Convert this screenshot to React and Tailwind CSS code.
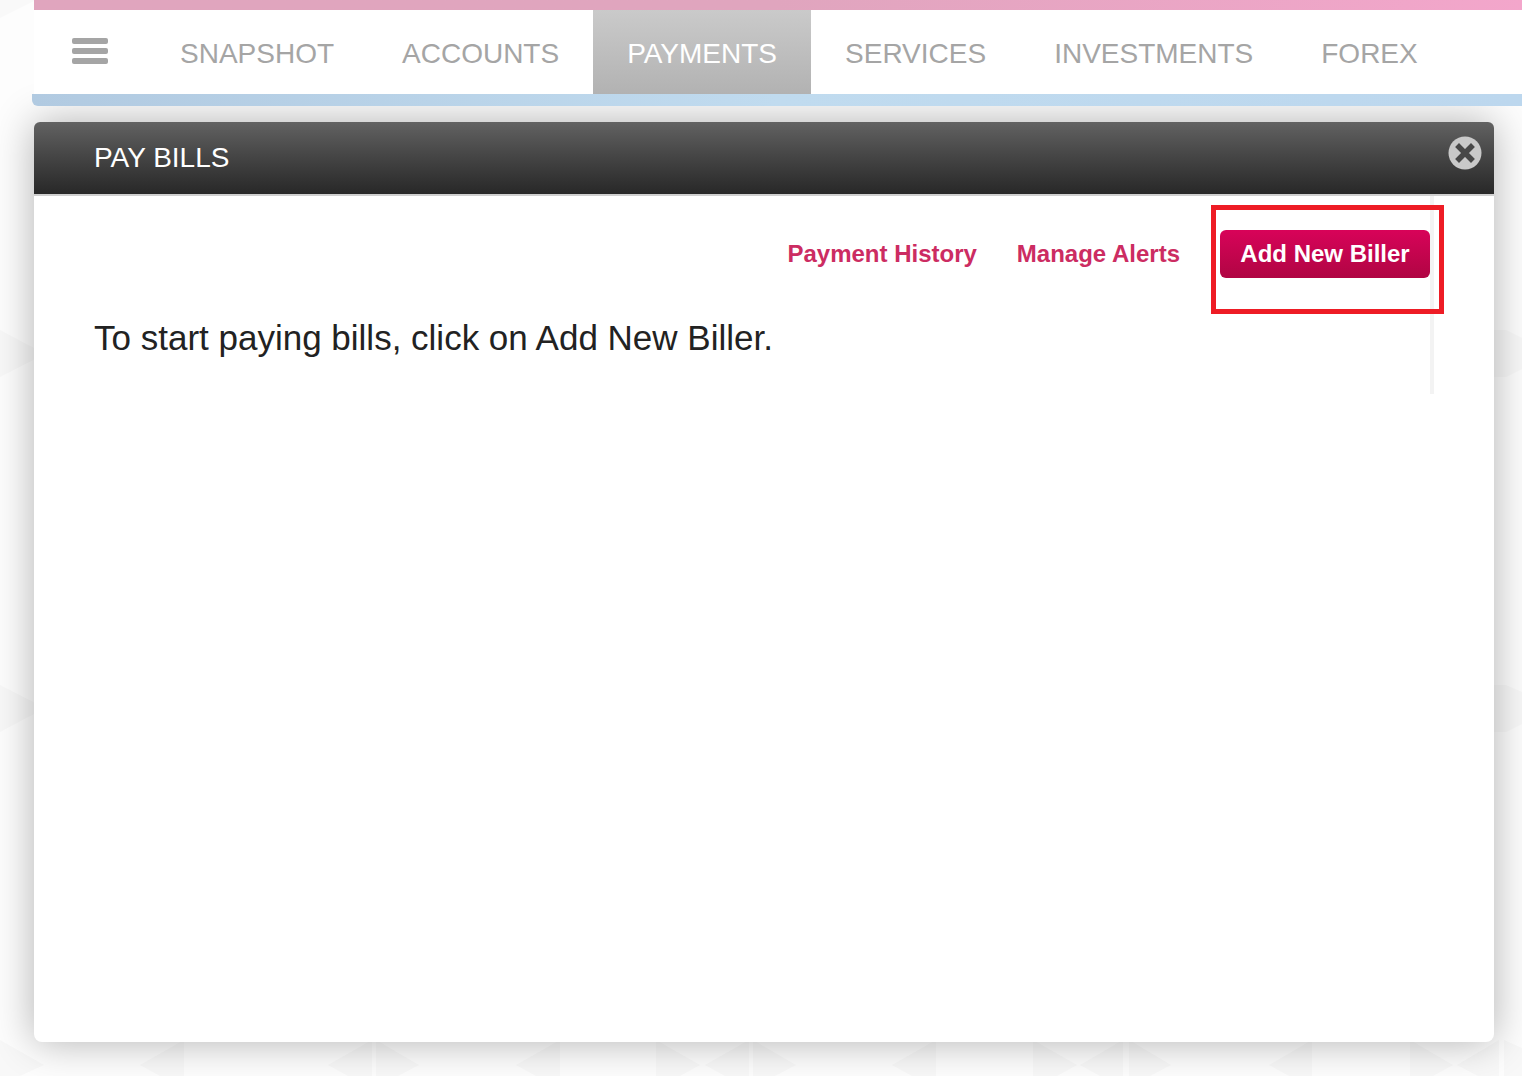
const navItems = ['SNAPSHOT', 'ACCOUNTS', 'PAYMENTS', 'SERVICES', 'INVESTMENTS', 'FOREX']

const Backdrop = () => (
  <svg className="absolute inset-0 w-full h-full" aria-hidden="true">
    <g fill="#f8f8f8">
      <polygon points="0,0 36,0 0,18" fill="#f9f9f9" />
      <polygon points="0,330 45,354 0,377" />
      <polygon points="0,685 45,708 0,732" />
      <polygon points="0,1040 44,1065 20,1076 0,1076" />
      <polygon points="184,1040 140,1065 160,1076 184,1076" />
      <polygon points="372,1040 328,1065 348,1076 372,1076" />
      <polygon points="376,1040 419,1065 398,1076 376,1076" />
      <polygon points="560,1040 516,1065 536,1076 560,1076" />
      <polygon points="656,1040 700,1065 680,1076 656,1076" />
      <polygon points="749,1040 705,1065 725,1076 749,1076" />
      <polygon points="753,1040 796,1065 775,1076 753,1076" />
      <polygon points="936,1040 892,1065 912,1076 936,1076" />
      <polygon points="1033,1040 1077,1065 1057,1076 1033,1076" />
      <polygon points="1123,1040 1080,1065 1100,1076 1123,1076" />
      <polygon points="1129,1040 1171,1065 1150,1076 1129,1076" />
      <polygon points="1312,1040 1269,1065 1289,1076 1312,1076" />
      <polygon points="1410,1040 1453,1065 1433,1076 1410,1076" />
      <polygon points="1499,1040 1457,1065 1478,1076 1499,1076" />
      <polygon points="1504,1040 1522,1048 1522,1076 1504,1076" />
      <polygon points="1490,330 1506,330 1522,338 1522,369 1506,377 1490,377" />
      <polygon points="1490,685 1506,685 1522,692 1522,724 1506,732 1490,732" />
    </g>
  </svg>
)

const CloseIcon = () => (
  <svg viewBox="0 0 34 34" className="w-[34px] h-[34px]" aria-hidden="true">
    <circle cx="17" cy="17" r="16.5" fill="#c9c9c9" />
    <path d="M11 11L23 23M23 11L11 23" stroke="#484848" strokeWidth="5.5" strokeLinecap="square" />
  </svg>
)

const NavBar = () => (
  <header className="relative z-10">
    <div className="ml-[34px] h-[10px] bg-linear-to-r from-[#e0a5be] from-50% to-[#f3a6cb]" />
    <nav className="ml-[34px] h-[84px] flex bg-white text-[28px] leading-[84px] text-[#a5a5a5]">
      <button type="button" aria-label="Menu" className="w-28 pl-[38px] pt-7 flex flex-col gap-1">
        <span className="block w-9 h-[6px] rounded-xs bg-[#a5a5a5]" />
        <span className="block w-9 h-[6px] rounded-xs bg-[#a5a5a5]" />
        <span className="block w-9 h-[6px] rounded-xs bg-[#a5a5a5]" />
      </button>
      {navItems.map((item) => (
        <a
          key={item}
          href="#"
          className={
            item === 'PAYMENTS'
              ? 'px-[34px] pt-[2px] text-white bg-linear-to-b from-[#cacaca] to-[#b2b2b2]'
              : 'px-[34px] pt-[2px]'
          }
        >
          {item}
        </a>
      ))}
    </nav>
    <div className="ml-8 h-3 rounded-bl-md bg-linear-to-r from-[#b1cae1] via-[#c0dbef] to-[#bcd7ee]" />
  </header>
)

const PayBills = () => (
  <main className="relative mt-4 ml-[34px] mr-7 mb-[34px] grow flex flex-col rounded-lg bg-white shadow-[0_0_40px_rgba(0,0,0,0.3)]">
    <div className="h-[74px] flex justify-between pl-[60px] pr-3 rounded-t-md border-b-2 border-[#cfcfcf] bg-linear-to-b from-[#626262] to-[#282828]">
      <h1 className="text-[28px] leading-[72px] text-white">PAY BILLS</h1>
      <button type="button" aria-label="Close" className="self-start pt-[14px]">
        <CloseIcon />
      </button>
    </div>

    <section className="mx-[60px] h-[198px] border-r-4 border-[#f3f3f3]">
      <div className="pt-[34px] flex justify-end items-center text-2xl leading-[48px] font-bold text-[#cc2c62]">
        <a href="#">Payment History</a>
        <a href="#" className="ml-10">Manage Alerts</a>
        <div className="relative ml-10">
          <button type="button" className="w-[210px] h-12 rounded-md text-white bg-linear-to-b from-[#d80359] to-[#b00543]">
            Add New Biller
          </button>
          {/* highlight frame */}
          <div className="absolute -top-[25px] -left-[9px] -right-[14px] h-[109px] border-5 border-[#ee1c25] pointer-events-none" />
        </div>
      </div>
      <p className="mt-9 text-[35px] leading-[48px] text-[#222222]">To start paying bills, click on Add New Biller.</p>
    </section>
  </main>
)

const App = () => {
  return (
    <div className="relative min-h-screen flex flex-col overflow-hidden bg-[#fdfdfd] font-['Liberation_Sans',Arial,sans-serif]">
      <Backdrop />
      <NavBar />
      <PayBills />
    </div>
  )
}

export default App
